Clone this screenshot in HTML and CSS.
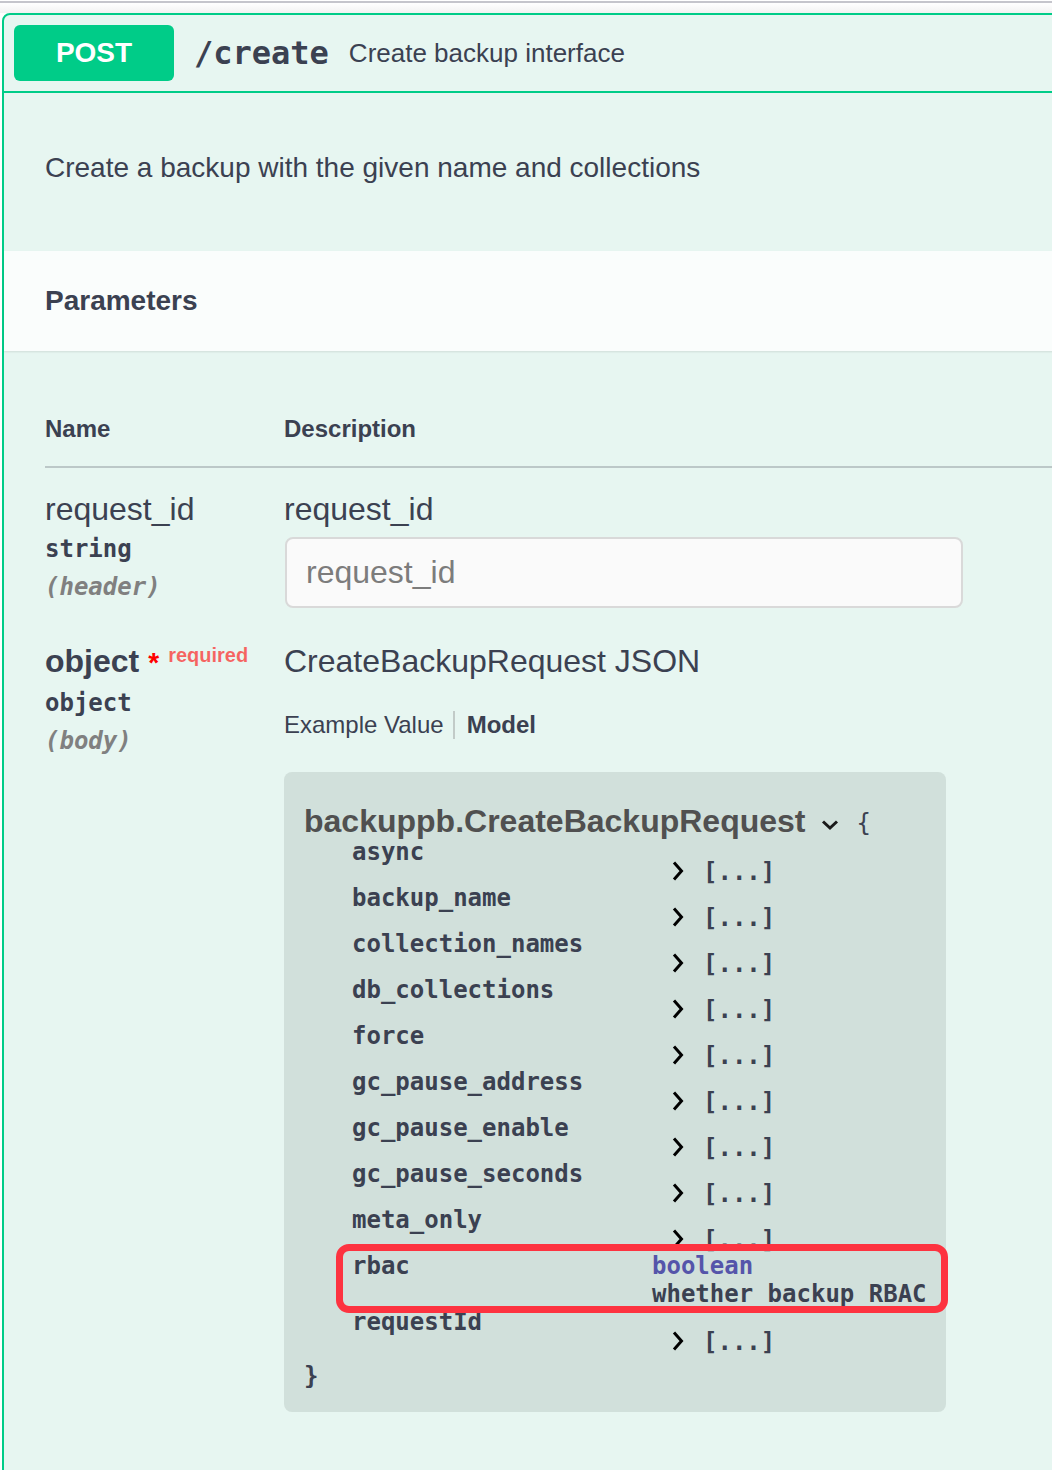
FILE: index.html
```html
<!DOCTYPE html>
<html lang="en">
<head>
<meta charset="utf-8">
<title>POST /create</title>
<link rel="stylesheet" href="styles.css">
</head>
<body>
<div class="prev"></div>
<div class="opblock">
  <div class="summary">
    <span class="method">POST</span>
    <span class="path">/create</span>
    <span class="summary-desc">Create backup interface</span>
  </div>
  <div class="desc">Create a backup with the given name and collections</div>
  <div class="section-header"><h4>Parameters</h4></div>
  <div class="table-container">
    <div class="thead">
      <div class="col-name">Name</div>
      <div class="col-desc">Description</div>
    </div>
    <div class="row">
      <div class="col-name">
        <div class="param-name">request_id</div>
        <div class="param-type">string</div>
        <div class="param-in">(header)</div>
      </div>
      <div class="col-desc">
        <div class="param-label">request_id</div>
        <input class="param-input" type="text" placeholder="request_id">
      </div>
    </div>
    <div class="row">
      <div class="col-name">
        <div class="param-name req">object<span class="star">*</span><span class="required">required</span></div>
        <div class="param-type">object</div>
        <div class="param-in">(body)</div>
      </div>
      <div class="col-desc">
        <div class="param-label">CreateBackupRequest JSON</div>
        <div class="tabs"><span class="tab tab-ex">Example Value</span><span class="tab tab-model">Model</span></div>
        <div class="model-box">
          <div class="model-title">
            <span class="title-text">backuppb.CreateBackupRequest</span>
            <svg class="chev-down" width="20" height="12" viewBox="0 0 20 12"><path d="M3 2.5 L10 9 L17 2.5" fill="none" stroke="#1a1a1a" stroke-width="3" stroke-linejoin="miter"/></svg>
            <span class="brace">{</span>
          </div>
          <div class="prop"><div class="prop-name">async</div><div class="prop-val"><svg class="chev" width="16" height="32" viewBox="0 0 16 32"><path d="M6 6.5 L13.5 15 L6 23.5" fill="none" stroke="#000" stroke-width="3"/></svg><span class="collapsed">[...]</span></div></div>
          <div class="prop"><div class="prop-name">backup_name</div><div class="prop-val"><svg class="chev" width="16" height="32" viewBox="0 0 16 32"><path d="M6 6.5 L13.5 15 L6 23.5" fill="none" stroke="#000" stroke-width="3"/></svg><span class="collapsed">[...]</span></div></div>
          <div class="prop"><div class="prop-name">collection_names</div><div class="prop-val"><svg class="chev" width="16" height="32" viewBox="0 0 16 32"><path d="M6 6.5 L13.5 15 L6 23.5" fill="none" stroke="#000" stroke-width="3"/></svg><span class="collapsed">[...]</span></div></div>
          <div class="prop"><div class="prop-name">db_collections</div><div class="prop-val"><svg class="chev" width="16" height="32" viewBox="0 0 16 32"><path d="M6 6.5 L13.5 15 L6 23.5" fill="none" stroke="#000" stroke-width="3"/></svg><span class="collapsed">[...]</span></div></div>
          <div class="prop"><div class="prop-name">force</div><div class="prop-val"><svg class="chev" width="16" height="32" viewBox="0 0 16 32"><path d="M6 6.5 L13.5 15 L6 23.5" fill="none" stroke="#000" stroke-width="3"/></svg><span class="collapsed">[...]</span></div></div>
          <div class="prop"><div class="prop-name">gc_pause_address</div><div class="prop-val"><svg class="chev" width="16" height="32" viewBox="0 0 16 32"><path d="M6 6.5 L13.5 15 L6 23.5" fill="none" stroke="#000" stroke-width="3"/></svg><span class="collapsed">[...]</span></div></div>
          <div class="prop"><div class="prop-name">gc_pause_enable</div><div class="prop-val"><svg class="chev" width="16" height="32" viewBox="0 0 16 32"><path d="M6 6.5 L13.5 15 L6 23.5" fill="none" stroke="#000" stroke-width="3"/></svg><span class="collapsed">[...]</span></div></div>
          <div class="prop"><div class="prop-name">gc_pause_seconds</div><div class="prop-val"><svg class="chev" width="16" height="32" viewBox="0 0 16 32"><path d="M6 6.5 L13.5 15 L6 23.5" fill="none" stroke="#000" stroke-width="3"/></svg><span class="collapsed">[...]</span></div></div>
          <div class="prop"><div class="prop-name">meta_only</div><div class="prop-val"><svg class="chev" width="16" height="32" viewBox="0 0 16 32"><path d="M6 6.5 L13.5 15 L6 23.5" fill="none" stroke="#000" stroke-width="3"/></svg><span class="collapsed">[...]</span></div></div>
          <div class="prop prop-open">
            <div class="prop-name">rbac</div>
            <div class="prop-val-open">
              <div class="prop-type">boolean</div>
              <div class="prop-desc">whether backup RBAC</div>
            </div>
            <div class="highlight"></div>
          </div>
          <div class="prop"><div class="prop-name">requestId</div><div class="prop-val"><svg class="chev" width="16" height="32" viewBox="0 0 16 32"><path d="M6 6.5 L13.5 15 L6 23.5" fill="none" stroke="#000" stroke-width="3"/></svg><span class="collapsed">[...]</span></div></div>
          <div class="brace-close">}</div>
        </div>
      </div>
    </div>
  </div>
</div>
</body>
</html>
```
FILE: styles.css
```css
* { box-sizing: border-box; }

html, body {
  margin: 0;
  background: #ffffff;
  overflow: hidden;
}

body {
  width: 1052px;
  height: 1470px;
  font-family: "Liberation Sans", Arial, sans-serif;
  color: #3b4151;
}

.prev {
  margin-top: 1px;
  height: 12px;
  border-top: 2px solid #c5c5cc;
  background: linear-gradient(#ffffff, #f2f2f2);
}

.opblock {
  margin-left: 2px;
  width: 1100px;
  min-height: 1470px;
  border: 2px solid #00cc88;
  border-radius: 8px;
  background: #e7f6f1;
}

.summary {
  display: flex;
  align-items: center;
  padding: 10px;
  border-bottom: 2px solid #00cc88;
}

.method {
  width: 160px;
  height: 56px;
  flex: none;
  display: flex;
  align-items: center;
  justify-content: center;
  background: #00cc88;
  color: #ffffff;
  font-size: 28px;
  font-weight: 700;
  border-radius: 6px;
}

.path {
  padding: 0 20px;
  font-family: "DejaVu Sans Mono", monospace;
  font-weight: 700;
  font-size: 32px;
  color: #3b4151;
}

.summary-desc {
  font-size: 26px;
}

.desc {
  padding: 55px 41px 63px;
  font-size: 28px;
  line-height: 40px;
}

.section-header {
  height: 100px;
  display: flex;
  align-items: center;
  padding: 0 41px;
  background: rgba(255, 255, 255, 0.8);
  box-shadow: 0 1px 2px rgba(0, 0, 0, 0.1);
}

.section-header h4 {
  margin: 0;
  font-size: 28px;
  font-weight: 700;
}

.table-container {
  padding: 64px 41px 80px;
}

.thead {
  display: flex;
  font-size: 24px;
  font-weight: 700;
  line-height: 28px;
  padding-bottom: 23px;
  border-bottom: 2px solid rgba(59, 65, 81, 0.25);
}

.col-name {
  width: 239px;
  flex: none;
}

.col-desc {
  flex: 1;
}

.row {
  display: flex;
  padding: 22px 0 12px;
}

.param-name {
  font-size: 32px;
  line-height: 38px;
}

.param-name.req {
  font-weight: 700;
  padding-bottom: 2px;
}

.star {
  margin-left: 9px;
  color: #ff0000;
  font-size: 28px;
  line-height: 1;
}

.required {
  margin-left: 9px;
  color: rgba(255, 0, 0, 0.6);
  font-size: 20px;
  line-height: 1;
  vertical-align: 10px;
}

.param-type {
  margin-top: 2px;
  font-family: "DejaVu Sans Mono", monospace;
  font-weight: 700;
  font-size: 24px;
  line-height: 38px;
}

.param-in {
  font-family: "DejaVu Sans Mono", monospace;
  font-weight: 700;
  font-style: italic;
  font-size: 24px;
  line-height: 38px;
  color: #808080;
}

.param-label {
  font-size: 32px;
  line-height: 38px;
}

.param-input {
  display: block;
  width: 678px;
  height: 71px;
  margin: 9px 0 0 1px;
  padding: 0 19px;
  border: 2px solid #d9d9d9;
  border-radius: 8px;
  background: #fafafa;
  font-family: "Liberation Sans", Arial, sans-serif;
  font-size: 32px;
  color: #3b4151;
  outline: none;
}

.param-input::placeholder {
  color: #7c7c7c;
}

.tabs {
  display: flex;
  margin-top: 31px;
  font-size: 24px;
  line-height: 28px;
}

.tab-ex {
  padding-right: 9px;
  border-right: 2px solid #c2cbc8;
}

.tab-model {
  padding-left: 12px;
  font-weight: 700;
}

.model-box {
  width: 662px;
  margin-top: 33px;
  padding: 34px 20px 20px;
  background: #d1e0db;
  border-radius: 8px;
  font-family: "DejaVu Sans Mono", monospace;
  font-size: 24px;
}

.model-title {
  display: flex;
  align-items: center;
  height: 30px;
  line-height: 30px;
}

.title-text {
  font-family: "Liberation Sans", Arial, sans-serif;
  font-size: 32px;
  font-weight: 700;
  color: #505050;
}

.chev-down {
  margin-left: 15px;
  margin-top: 8px;
  flex: none;
}

.brace {
  margin-left: 16px;
  margin-top: 4px;
  color: #3b4151;
}

.prop {
  display: flex;
  height: 46px;
}

.prop-name {
  width: 348px;
  flex: none;
  padding-left: 48px;
  font-weight: 700;
  line-height: 32px;
}

.prop-val {
  display: flex;
  padding-top: 20px;
  line-height: 32px;
}

.chev {
  flex: none;
  margin-left: 16px;
}

.collapsed {
  margin-left: 19px;
  font-weight: 700;
  color: #3b4151;
}

.prop.prop-open {
  position: relative;
  height: auto;
}

.prop-val-open {
  font-weight: 700;
  white-space: nowrap;
}

.prop-type {
  line-height: 32px;
  color: #55a;
}

.prop-desc {
  line-height: 24px;
}

.highlight {
  position: absolute;
  left: 32px;
  right: -22px;
  top: -6px;
  bottom: -7px;
  border: 7px solid #fd3340;
  border-radius: 13px;
  pointer-events: none;
}

.brace-close {
  margin-top: 8px;
  line-height: 32px;
  font-weight: 700;
}
```
